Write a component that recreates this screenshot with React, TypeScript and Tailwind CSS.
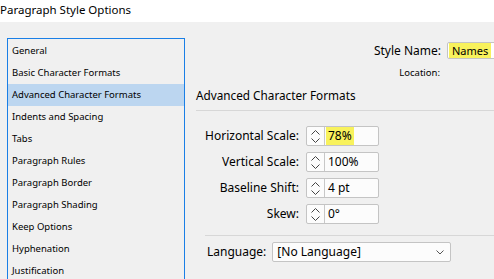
const items = [
  "General",
  "Basic Character Formats",
  "Advanced Character Formats",
  "Indents and Spacing",
  "Tabs",
  "Paragraph Rules",
  "Paragraph Border",
  "Paragraph Shading",
  "Keep Options",
  "Hyphenation",
  "Justification",
];

const fields = [
  { label: "Horizontal Scale:", value: "78%", hl: true },
  { label: "Vertical Scale:", value: "100%", hl: false },
  { label: "Baseline Shift:", value: "4 pt", hl: false },
  { label: "Skew:", value: "0°", hl: false },
];

function Spinner() {
  return (
    <div className="flex h-full w-[18px] flex-col items-center justify-center gap-[3px] border-r border-[#c8c8c8]">
      <svg width="9" height="5" viewBox="0 0 9 5" fill="none" stroke="#444" strokeWidth="1">
        <path d="M0.5 4.5L4.5 0.5L8.5 4.5" />
      </svg>
      <svg width="9" height="5" viewBox="0 0 9 5" fill="none" stroke="#444" strokeWidth="1">
        <path d="M0.5 0.5L4.5 4.5L8.5 0.5" />
      </svg>
    </div>
  );
}

export default function App() {
  return (
    <div
      className="flex h-[279px] w-[494px] flex-col overflow-hidden bg-[#f0f0f0] text-black"
      style={{ fontFamily: '"Noto Sans", "Open Sans", sans-serif' }}
    >
      {/* title */}
      <div className="flex h-[22px] shrink-0 items-center bg-white pb-[3px] text-[11.5px]">
        Paragraph Style Options
      </div>

      <div className="flex flex-1">
        {/* category list */}
        <div className="ml-[7px] mt-[16px] w-[178px] shrink-0 border border-[#1a7fe6] pt-px">
          {items.map((it) => (
            <div
              key={it}
              className={`flex h-[22px] items-center pl-[4px] text-[9.5px] ${
                it === "Advanced Character Formats" ? "bg-[#bcd6f0]" : ""
              }`}
            >
              {it}
            </div>
          ))}
        </div>

        {/* options panel */}
        <div className="flex flex-1 flex-col pl-[11px]">
          <div className="mt-[20px] -mr-[13px] flex h-[17px] items-center justify-end gap-[6px]">
            <span className="text-[12px]">Style Name:</span>
            <div className="flex h-[17px] w-[60px] shrink-0 items-center rounded-[2px] border border-[#c4c4c4] bg-white pl-[1px]">
              <span className="bg-[#f8f25c] px-[3px] text-[11px] leading-[15px]">Names</span>
            </div>
          </div>
          <div className="mt-[8px] flex justify-end pr-[54px] text-[9.5px] leading-[12px]">
            Location:
          </div>

          <div className="mt-[7px] text-[11.75px] leading-[18px]">Advanced Character Formats</div>
          <div className="mt-[6px] h-px bg-[#d7d7d7]" />

          <div className="mt-[15px] flex w-[183px] flex-col gap-[6px]">
            {fields.map((f) => (
              <div key={f.label} className="flex h-[20px] items-center justify-end gap-[7px]">
                <span className="text-[12px]">{f.label}</span>
                <div className="flex h-[20px] w-[73px] items-stretch rounded-[2px] border border-[#c4c4c4] bg-[#fcfcfc]">
                  <Spinner />
                  <div className="flex flex-1 items-stretch pl-[1px]">
                    <span
                      className={`flex items-center px-[2px] text-[12px] ${f.hl ? "bg-[#f8f25c]" : ""}`}
                    >
                      {f.value}
                    </span>
                  </div>
                </div>
              </div>
            ))}
          </div>

          <div className="ml-[9px] mt-[11px] h-px bg-[#d7d7d7]" />

          <div className="ml-[11px] mt-[6px] flex items-center gap-[6px]">
            <span className="text-[12px]">Language:</span>
            <div className="flex h-[20px] w-[179px] items-center justify-between rounded-[2px] border border-[#c4c4c4] bg-[#fcfcfc] pl-[4px] pr-[6px]">
              <span className="text-[12px]">[No Language]</span>
              <svg width="8" height="5" viewBox="0 0 8 5" fill="none" stroke="#555" strokeWidth="1">
                <path d="M0.5 0.5L4 4L7.5 0.5" />
              </svg>
            </div>
          </div>
        </div>
      </div>
    </div>
  );
}
